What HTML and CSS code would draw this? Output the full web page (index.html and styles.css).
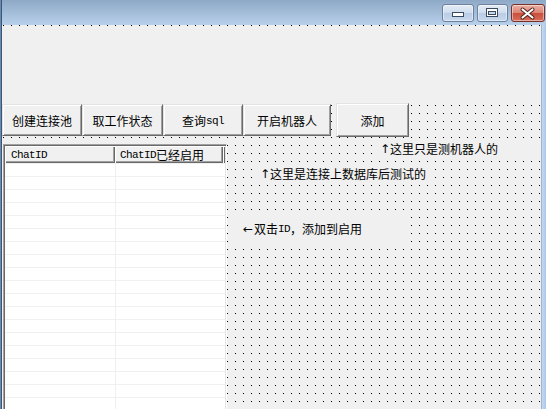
FILE: index.html
```html
<!DOCTYPE html>
<html>
<head>
<meta charset="utf-8">
<link rel="stylesheet" href="styles.css">
</head>
<body>
<div class="window">
  <div class="frame-left"></div>
  <div class="main">
    <div class="titlebar">
      <div class="cap cap-min">
        <svg width="30" height="16" viewBox="0 0 30 16"><rect x="9.5" y="7.5" width="11" height="4" fill="#fff" stroke="#3a4b60"/></svg>
      </div>
      <div class="cap cap-max">
        <svg width="29" height="16" viewBox="0 0 29 16"><rect x="8.5" y="3.5" width="11" height="8" fill="#fff" stroke="#3a4b60"/><rect x="10.5" y="6.5" width="7" height="3" fill="#c9d7ea" stroke="#3a4b60"/></svg>
      </div>
      <div class="cap cap-close">
        <svg width="32" height="16" viewBox="0 0 32 16"><path d="M10.5 4.5 L20.5 12.5 M20.5 4.5 L10.5 12.5" stroke="#4a1d18" stroke-width="4" stroke-linecap="round"/><path d="M10.5 4.5 L20.5 12.5 M20.5 4.5 L10.5 12.5" stroke="#fff" stroke-width="2.2" stroke-linecap="round"/></svg>
      </div>
    </div>
    <div class="content">
      <div class="client">
        <div class="panel"></div>
        <div class="toolbar">
          <div class="btn w80">创建连接池</div>
          <div class="btn w81">取工作状态</div>
          <div class="btn w80">查询<span class="a">sql</span></div>
          <div class="btn w88">开启机器人</div>
          <div class="btn btn-add w73">添加</div>
        </div>
        <div class="lower">
          <div class="listview">
            <div class="lv-header">
              <div class="hcell c1"><span class="a">ChatID</span></div>
              <div class="hcell c2"><span class="a">ChatID</span>已经启用</div>
              <div class="hcell hfill"></div>
            </div>
            <div class="lv-body"></div>
          </div>
          <div class="canvas">
            <div class="lbl l1"><span class="arw">↑</span>这里只是测机器人的</div>
            <div class="lbl l2"><span class="arw">↑</span>这里是连接上数据库后测试的</div>
            <div class="lbl l3"><span class="arw arw-l">←</span>双击<span class="a">ID</span>，添加到启用</div>
          </div>
        </div>
      </div>
      <div class="frame-right"></div>
    </div>
  </div>
</div>
</body>
</html>
```

FILE: styles.css
```css
* { box-sizing: border-box; }
html, body { margin: 0; padding: 0; }
body {
  width: 546px;
  height: 409px;
  overflow: hidden;
  font-family: "Noto Sans CJK SC", "Noto Sans CJK JP", sans-serif;
  font-size: 12px;
  color: #000;
  background: #f0f0f0;
}
.window { display: flex; width: 546px; height: 409px; overflow: hidden; }
.frame-left {
  width: 2px;
  flex: none;
  background: linear-gradient(to right, #6a8bb0 0, #6a8bb0 1px, #3b5677 1px, #3b5677 2px);
}
.main { flex: 1; display: flex; flex-direction: column; min-width: 0; }
.titlebar {
  height: 25px;
  flex: none;
  display: flex;
  align-items: flex-start;
  background: linear-gradient(#8ea9c7, #b8d0ea);
}
.cap {
  height: 18px;
  margin-top: 4px;
  border: 1px solid #6d819e;
  border-radius: 3px;
  flex: none;
  background: linear-gradient(#e4ecf6 0%, #d0ddee 48%, #b9cce5 52%, #c8d9ee 100%);
  box-shadow: inset 0 0 0 1px rgba(255, 255, 255, 0.45);
}
.cap svg { display: block; }
.cap-min { width: 32px; margin-left: auto; }
.cap-max { width: 31px; margin-left: 3px; }
.cap-close {
  width: 34px;
  margin-left: 3px;
  margin-right: 1px;
  border-color: #7a2f27;
  background: linear-gradient(#eab0a5 0%, #dc8574 48%, #c94f3c 52%, #d66e5a 100%);
}
.content { flex: 1; display: flex; min-height: 0; }
.client {
  width: 539px;
  flex: none;
  display: flex;
  flex-direction: column;
  overflow: hidden;
  background-color: #000;
  background-image:
    linear-gradient(to right, transparent 1px, #f0f0f0 1px),
    linear-gradient(to bottom, transparent 1px, #f0f0f0 1px);
  background-size: 8px 8px;
  background-position: 1px 0;
}
.frame-right {
  flex: 1;
  border-left: 1px solid #a3b3c6;
  background: linear-gradient(to right, #c4daf1, #a9c6e7);
}
.panel { height: 77px; margin-top: 1px; background: #f0f0f0; flex: none; }
.toolbar { height: 34px; display: flex; align-items: flex-start; flex: none; }
.btn {
  height: 32px;
  margin-top: 1px;
  display: flex;
  align-items: center;
  justify-content: center;
  padding-top: 2px;
  background: #f0f0f0;
  border: 1px solid;
  border-color: #e3e3e3 #696969 #696969 #e3e3e3;
  box-shadow: inset 1px 1px #fff, inset -1px -1px #a0a0a0;
  flex: none;
  white-space: nowrap;
  line-height: 14px;
}
.btn-add { height: 34px; margin-top: 0; margin-left: 5px; }
.w80 { width: 80px; }
.w81 { width: 81px; }
.w88 { width: 88px; }
.w73 { width: 73px; }
.a {
  font-family: "Liberation Mono", monospace;
  font-size: 11px;
  letter-spacing: -0.6px;
}
.lower { flex: 1; display: flex; align-items: flex-start; min-height: 0; overflow: hidden; }
.listview {
  width: 224px;
  height: 290px;
  margin-left: 1px;
  margin-top: 7px;
  flex: none;
  display: flex;
  flex-direction: column;
  padding: 1px;
  border: 1px solid;
  border-color: #a0a0a0 #fff #fff #a0a0a0;
  box-shadow: inset 1px 1px #696969, inset -1px -1px #e3e3e3;
  background: #fff;
}
.lv-header { height: 17px; display: flex; flex: none; }
.hcell {
  height: 17px;
  display: flex;
  align-items: center;
  background: #f0f0f0;
  white-space: nowrap;
  line-height: 14px;
  box-shadow: inset 1px 1px #fff, inset -1px -1px #696969, inset -2px -2px #a0a0a0;
}
.c1 { width: 110px; padding-left: 6px; flex: none; }
.c2 { width: 108px; padding-left: 5px; flex: none; }
.hfill { flex: 1; }
.lv-body {
  flex: 1;
  background-color: #fff;
  background-image:
    linear-gradient(to right, transparent 110px, #f0f0f0 110px, #f0f0f0 111px, transparent 111px),
    repeating-linear-gradient(to bottom, #f0f0f0 0, #f0f0f0 1px, transparent 1px, transparent 13px);
}
.canvas { flex: 1; display: flex; flex-direction: column; align-items: flex-start; }
.lbl {
  display: flex;
  align-items: center;
  background: #f0f0f0;
  white-space: nowrap;
  line-height: 14px;
  flex: none;
}
.l1 { margin-left: 152px; margin-top: 3px; height: 18px; width: 162px; padding-left: 3px; }
.l2 { margin-left: 31px; margin-top: 7px; height: 17px; width: 170px; padding-left: 4px; }
.l3 { margin-left: 3px; margin-top: 30px; height: 34px; width: 179px; padding-left: 13px; }
.arw {
  font-family: "DejaVu Sans", sans-serif;
  font-size: 12px;
  display: inline-block;
  width: 10px;
  margin-left: -2px;
  overflow: visible;
}
.arw-l { width: 11px; margin-left: 0; }
```
